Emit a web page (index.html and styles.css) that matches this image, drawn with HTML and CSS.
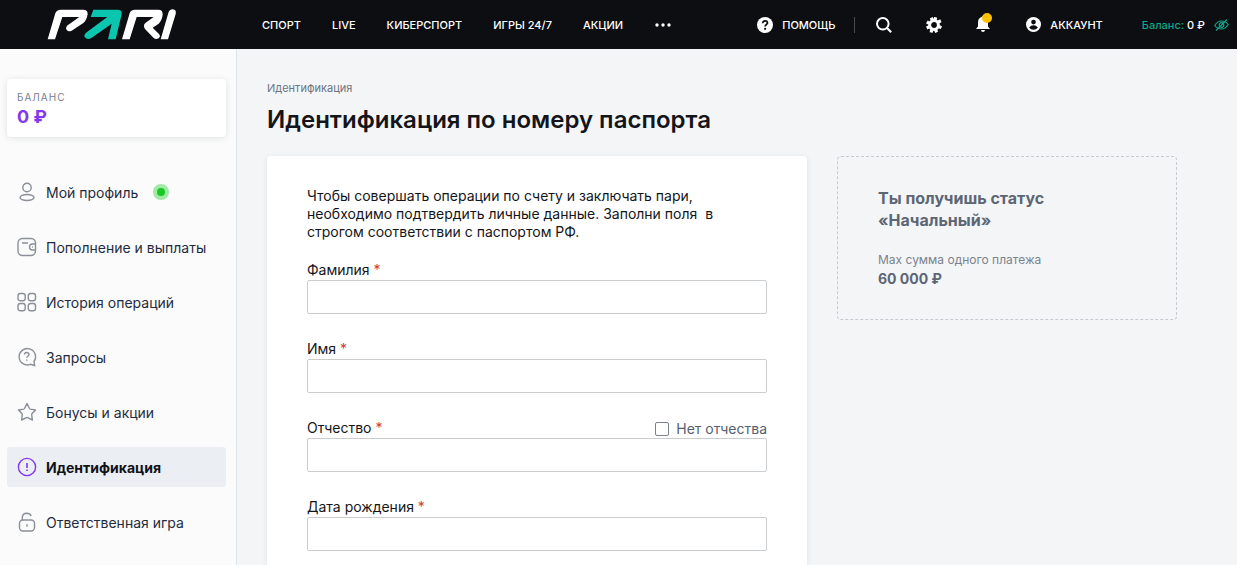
FILE: index.html
```html
<!DOCTYPE html>
<html lang="ru">
<head>
<meta charset="utf-8">
<title>PARI — Идентификация</title>
<meta name="viewport" content="width=device-width, initial-scale=1">
<link rel="stylesheet" href="styles.css">
</head>
<body>
<header class="header">
  <a class="logo" href="#" aria-label="PARI">
    <svg width="130" height="32" viewBox="51 26 390 96" aria-hidden="true">
      <g fill="#fff">
        <path d="M53 117H75L97 50H148L111 76Q106 82 110 89Q116 96 125 91L160 68Q170 60 173 42Q174 28 160 28H92Q80 28 76 39Z"/>
        <path d="M276 117H299L320 50H371L346 68Q338 76 345 86L371 113Q378 119 386 114Q393 108 387 101L368 82L386 70Q395 62 398 44Q399 28 385 28H315Q302 28 299 39Z"/>
        <path d="M392 117H414L437 41Q440 28 428 27Q418 27 415 38Z"/>
      </g>
      <path fill="#0bc6ae" d="M190 28H263Q277 28 275 42L257 117H234L245 70L184 113Q172 120 164 110Q161 103 170 96L232 50H182Z"/>
    </svg>
  </a>
  <nav class="nav" aria-label="Основное меню">
    <a href="#">СПОРТ</a>
    <a href="#">LIVE</a>
    <a href="#">КИБЕРСПОРТ</a>
    <a href="#">ИГРЫ 24/7</a>
    <a href="#">АКЦИИ</a>
    <button class="icon-button" type="button" aria-label="Ещё">
      <svg width="18" height="16" viewBox="0 0 18 16" fill="#fff"><circle cx="3" cy="8" r="1.7"/><circle cx="9" cy="8" r="1.7"/><circle cx="15" cy="8" r="1.7"/></svg>
    </button>
  </nav>
  <div class="tools">
    <a class="help" href="#">
      <svg width="16" height="16" viewBox="0 0 16 16"><circle cx="8" cy="8" r="8" fill="#fff"/><path d="M5.6 6.2C5.7 4.6 6.7 3.9 8.1 3.9C9.6 3.9 10.5 4.8 10.5 6C10.5 7.5 8.1 7.6 8.1 9.5" fill="none" stroke="#0d0e12" stroke-width="1.7"/><circle cx="8.1" cy="11.8" r="1.1" fill="#0d0e12"/></svg>
      ПОМОЩЬ
    </a>
    <button class="icon-button" type="button" aria-label="Поиск">
      <svg width="16" height="16" viewBox="0 0 16 16" fill="none" stroke="#fff" stroke-width="2"><circle cx="6.8" cy="6.8" r="5.8"/><path d="M11 11L15.2 15.2"/></svg>
    </button>
    <button class="icon-button" type="button" aria-label="Настройки">
      <svg width="16" height="16" viewBox="0 0 16 16" fill="none" stroke="#fff"><circle cx="8" cy="8" r="4.4" stroke-width="3"/><path stroke-width="3.2" d="M9 3L9.700 .3M12.100 5L14.900 3.800M12.800 9.400L15.300 10.900M9.400 12.800L10.800 15.300M5.700 12.500L5.200 15.500M3.300 9.800L.7 11M3.300 6.400L.9 4.800M6.500 3.300L5.200 .7"/></svg>
    </button>
    <button class="icon-button bell" type="button" aria-label="Уведомления">
      <svg width="16" height="20" viewBox="0 0 16 20"><path fill="#fff" d="M0 16L2 13.500V9Q2.300 5 5.500 4Q7 2 8.500 4Q11.700 5 12 9V13.500L14 16ZM5 17H9Q8.800 19 7 19Q5.200 19 5 17Z"/><circle cx="11" cy="5" r="5" fill="#ffc107"/></svg>
    </button>
    <a class="account" href="#">
      <svg width="15" height="15" viewBox="0 0 14 14"><circle cx="7" cy="7" r="7" fill="#fff"/><circle cx="7" cy="4.700" r="2.200" fill="#0d0e12"/><path fill="#0d0e12" d="M2.900 9.800Q4.500 7.800 7 7.800T11.100 9.800Q9.500 12 7 12T2.900 9.800Z"/></svg>
      АККАУНТ
    </a>
    <div class="header-balance">
      <span><span class="muted-teal">Баланс:</span> 0 ₽</span>
      <button class="icon-button" type="button" aria-label="Скрыть баланс">
        <svg width="15" height="14" viewBox="0 0 15 14" fill="none" stroke="#12a587" stroke-width="1.200"><path d="M.8 7.500Q3.500 3 7.500 3T14.200 6.500Q11.500 11 7.500 11T.8 7.500Z"/><circle cx="7.500" cy="7" r="2.300"/><path d="M2 12.500L13 1.500"/></svg>
      </button>
    </div>
  </div>
</header>
<div class="layout">
  <aside class="sidebar">
    <div class="balance-card">
      <div class="balance-title">БАЛАНС</div>
      <div class="balance-value">0 ₽</div>
    </div>
    <nav class="menu" aria-label="Личный кабинет">
      <a href="#">
        <svg viewBox="0 0 20 20"><circle cx="10" cy="5.500" r="4.200"/><ellipse cx="10" cy="15.500" rx="7" ry="3"/></svg>
        Мой профиль <span class="status-dot"></span>
      </a>
      <a href="#">
        <svg viewBox="0 0 20 20"><rect x="1" y="1.500" width="17.500" height="17" rx="4.500"/><path d="M5 6H11M18.500 7H15.500Q12.500 7 12.500 10T15.500 13H18.500M15 10H15.800"/></svg>
        Пополнение и выплаты
      </a>
      <a href="#">
        <svg viewBox="0 0 20 20"><rect x="1" y="1.500" width="7.200" height="7.200" rx="2.300"/><rect x="11.300" y="1.500" width="7.200" height="7.200" rx="2.300"/><rect x="1" y="11.500" width="7.200" height="7.200" rx="2.300"/><rect x="11.300" y="11.500" width="7.200" height="7.200" rx="2.300"/></svg>
        История операций
      </a>
      <a href="#">
        <svg viewBox="0 0 20 20"><path d="M17.700 18.500L17 14.500A8.200 8.200 0 1 0 13.500 17.300ZM7.500 7.500Q7.600 5.500 9.700 5.500T12 7.500C12 9 9.800 9 9.800 10.800M9.800 12.600V13.700"/></svg>
        Запросы
      </a>
      <a href="#">
        <svg viewBox="0 0 20 20"><path stroke-linejoin="round" d="M10 1.500L12.500 6.500Q12.800 7 13.300 7.100L18.500 8L14.900 11.800Q14.600 12.100 14.700 12.600L15.400 18L10.600 15.600Q10 15.400 9.400 15.600L4.600 18L5.300 12.600Q5.400 12.100 5.100 11.800L1.500 8L6.700 7.100Q7.200 7 7.500 6.500Z"/></svg>
        Бонусы и акции
      </a>
      <a class="active" href="#" aria-current="page">
        <svg viewBox="0 0 20 20"><circle cx="10" cy="10" r="8.600"/><path stroke-width="1.600" d="M10 6V11M10 12.600V14"/></svg>
        Идентификация
      </a>
      <a href="#">
        <svg viewBox="0 0 20 20"><rect x="2.500" y="8" width="15" height="11" rx="3.500"/><path d="M5.300 8V5.500Q5.500 1.300 9.700 1.200Q13 1.200 14.200 4M10 12.300V14.700"/></svg>
        Ответственная игра
      </a>
    </nav>
  </aside>
  <main class="main">
    <a class="breadcrumb" href="#">Идентификация</a>
    <h1>Идентификация по номеру паспорта</h1>
    <div class="columns">
      <form class="form-card">
        <p>Чтобы совершать операции по счету и заключать пари, необходимо подтвердить личные данные. Заполни поля&nbsp; в строгом соответствии с паспортом РФ.</p>
        <div class="field">
          <div class="field-head"><label for="surname">Фамилия <span class="required">*</span></label></div>
          <input id="surname" type="text">
        </div>
        <div class="field">
          <div class="field-head"><label for="name">Имя <span class="required">*</span></label></div>
          <input id="name" type="text">
        </div>
        <div class="field">
          <div class="field-head">
            <label for="patronymic">Отчество <span class="required">*</span></label>
            <label class="check"><input type="checkbox">Нет отчества</label>
          </div>
          <input id="patronymic" type="text">
        </div>
        <div class="field">
          <div class="field-head"><label for="birthday">Дата рождения <span class="required">*</span></label></div>
          <input id="birthday" type="text">
        </div>
      </form>
      <section class="status-card">
        <h2>Ты получишь статус<br>«Начальный»</h2>
        <div class="limit-title">Мах сумма одного платежа</div>
        <div class="limit-value">60 000 ₽</div>
      </section>
    </div>
  </main>
</div>
</body>
</html>
```
FILE: styles.css
```css
* { box-sizing: border-box; }

body {
  margin: 0;
  min-height: 100vh;
  display: flex;
  flex-direction: column;
  background: #f4f5f7;
  color: #14151a;
  font-family: Inter, "Noto Sans", sans-serif;
  font-size: 14px;
  line-height: 18px;
}

a { color: inherit; text-decoration: none; }
svg { display: block; flex: none; }

.header {
  display: flex;
  align-items: center;
  height: 49px;
  padding: 0 8px 0 47px;
  background: #0d0e12;
  color: #fff;
  font-size: 11px;
  font-weight: 500;
  white-space: nowrap;
}

.icon-button {
  padding: 0;
  border: 0;
  background: none;
  cursor: pointer;
}

.nav {
  display: flex;
  align-items: center;
  gap: 31px;
  margin-left: 85px;
}

.tools {
  display: flex;
  align-items: center;
  gap: 34px;
  margin-left: auto;
}

.help, .account, .header-balance {
  display: flex;
  align-items: center;
  gap: 9px;
}

.help {
  padding-right: 19px;
  border-right: 1px solid #4a4b50;
  line-height: 16px;
  margin-right: -13px;
}

.bell { padding-bottom: 4px; }

.header-balance { margin-left: 5px; }
.muted-teal { color: #12a587; }

.layout { display: flex; flex: 1; }

.sidebar {
  flex: none;
  width: 237px;
  padding: 30px 10px 15px 7px;
  border-right: 1px solid #dfe3e8;
  background: #fbfbfb;
}

.balance-card {
  padding: 10px 10px 8px;
  border-radius: 4px;
  background: #fff;
  box-shadow: 0 1px 6px rgba(20, 30, 50, 0.12);
}

.balance-title {
  color: #78808c;
  font-size: 10px;
  line-height: 16px;
  letter-spacing: 1px;
}

.balance-value {
  color: #8338ec;
  font-size: 18px;
  font-weight: 700;
  line-height: 24px;
}

.menu {
  display: flex;
  flex-direction: column;
  gap: 15px;
  margin-top: 35px;
}

.menu a {
  display: flex;
  align-items: center;
  gap: 9px;
  height: 40px;
  padding: 2px 10px 0;
  border-radius: 3px;
  color: #1f2c40;
  white-space: nowrap;
}

.menu svg {
  width: 20px;
  height: 20px;
  margin-bottom: 2px;
  fill: none;
  stroke: #8a8f98;
  stroke-width: 1.4;
}

.menu .active {
  background: #ebeef3;
  color: #111217;
  font-weight: 700;
}

.menu .active svg { stroke: #8338ec; }

.status-dot {
  width: 16px;
  height: 16px;
  margin: 0 0 2px 6px;
  border: 4px solid #a0e8a4;
  border-radius: 50%;
  background: #18c926;
}

.main {
  display: flex;
  flex: 1;
  flex-direction: column;
  min-width: 0;
  padding: 30px 60px 0 30px;
}

.breadcrumb {
  color: #6d7480;
  font-size: 11px;
}

h1 {
  margin: 8px 0 21px;
  font-size: 24px;
  font-weight: 600;
  line-height: 30px;
}

.columns {
  display: grid;
  flex: 1;
  grid-template-columns: minmax(0, 1fr) 340px;
  gap: 30px;
}

.form-card {
  padding: 31px 40px 14px;
  border-radius: 4px 4px 0 0;
  background: #fff;
  box-shadow: 0 1px 6px rgba(20, 30, 50, 0.08);
}

.form-card p { margin: 0 0 20px; }

.field { margin-bottom: 26px; }
.field:last-child { margin-bottom: 0; }

.field-head {
  display: flex;
  justify-content: space-between;
  height: 19px;
}

.required { color: #d03a3a; }

.field input[type="text"] {
  display: block;
  width: 100%;
  height: 34px;
  padding: 0 10px;
  border: 1px solid #c9cdd0;
  border-radius: 2px;
  background: #fff;
  font: inherit;
}

.check {
  display: flex;
  align-items: center;
  gap: 7px;
  color: #56606e;
}

.check input {
  appearance: none;
  width: 14px;
  height: 14px;
  margin: 0;
  border: 1px solid #7d828a;
  border-radius: 2px;
  background: #fff;
}

.check input:checked { background: #8338ec; }

.status-card {
  align-self: start;
  padding: 30px 40px;
  border: 1px dashed #c6cbd3;
  border-radius: 4px;
  color: #5c6675;
}

h2 {
  margin: 0 0 20px;
  font-size: 16px;
  font-weight: 700;
  line-height: 22px;
}

.limit-title {
  color: #7b838e;
  font-size: 12px;
}

.limit-value {
  font-weight: 700;
  line-height: 20px;
}
```
